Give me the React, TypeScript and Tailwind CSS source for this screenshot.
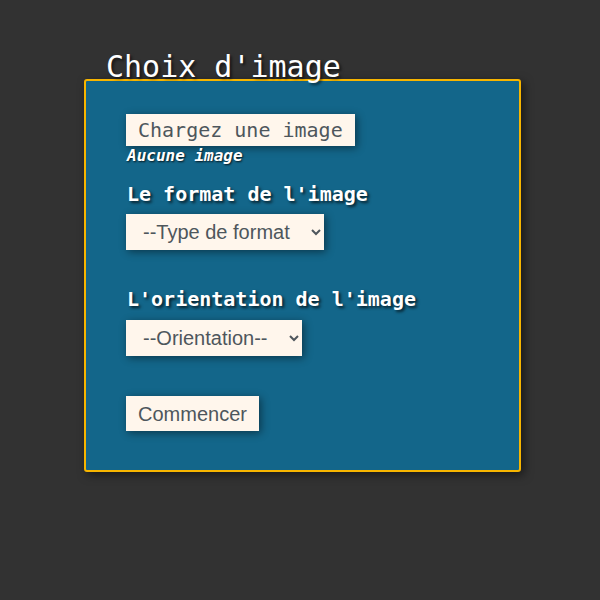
import React from 'react'

export default function App() {
  return (
    <div className="min-h-screen w-full bg-[#323232] font-['DejaVu_Sans_Mono',monospace] text-white">
      <div className="pl-[84px] pt-[52px]">
        <h1 className="pl-[22px] text-[30px] leading-none font-normal text-white [text-shadow:2px_2px_3px_rgba(0,0,0,0.6)]">
          Choix d'image
        </h1>
        <div className="-mt-[3px] w-[437px] h-[393px] rounded-[3px] border-2 border-[#f7b500] bg-[#13668a] pl-[40px] pt-[33px] shadow-[3px_3px_10px_rgba(0,0,0,0.5)]">
          <button className="h-[32px] px-[12px] bg-[#fff6ec] text-[20px] leading-[24px] text-[#4e565c] shadow-[2px_2px_8px_rgba(0,0,0,0.45)]">
            Chargez une image
          </button>
          <p className="pl-px text-[16px] leading-[20px] font-bold italic [text-shadow:1px_1px_2px_rgba(0,0,0,0.8)]">
            Aucune image
          </p>
          <label className="mt-[16px] block pl-px text-[20px] leading-[24px] font-bold [text-shadow:2px_2px_3px_rgba(0,0,0,0.7)]">
            Le format de l'image
          </label>
          <select className="mt-[8px] h-[36px] w-[198px] pl-[13px] pr-[6px] bg-[#fff6ec] font-['Liberation_Sans',Arial,sans-serif] text-[20px] text-[#4e565c] shadow-[2px_2px_8px_rgba(0,0,0,0.45)]">
            <option>--Type de format</option>
          </select>
          <label className="mt-[37px] block pl-px text-[20px] leading-[24px] font-bold [text-shadow:2px_2px_3px_rgba(0,0,0,0.7)]">
            L'orientation de l'image
          </label>
          <select className="mt-[9px] h-[36px] w-[176px] pl-[13px] pr-[6px] bg-[#fff6ec] font-['Liberation_Sans',Arial,sans-serif] text-[20px] text-[#4e565c] shadow-[2px_2px_8px_rgba(0,0,0,0.45)]">
            <option>--Orientation--</option>
          </select>
          <div className="mt-[40px]">
            <button className="h-[35px] px-[12px] bg-[#fff6ec] font-['Liberation_Sans',Arial,sans-serif] text-[20px] leading-[24px] text-[#4e565c] shadow-[2px_2px_8px_rgba(0,0,0,0.45)]">
              Commencer
            </button>
          </div>
        </div>
      </div>
    </div>
  )
}
